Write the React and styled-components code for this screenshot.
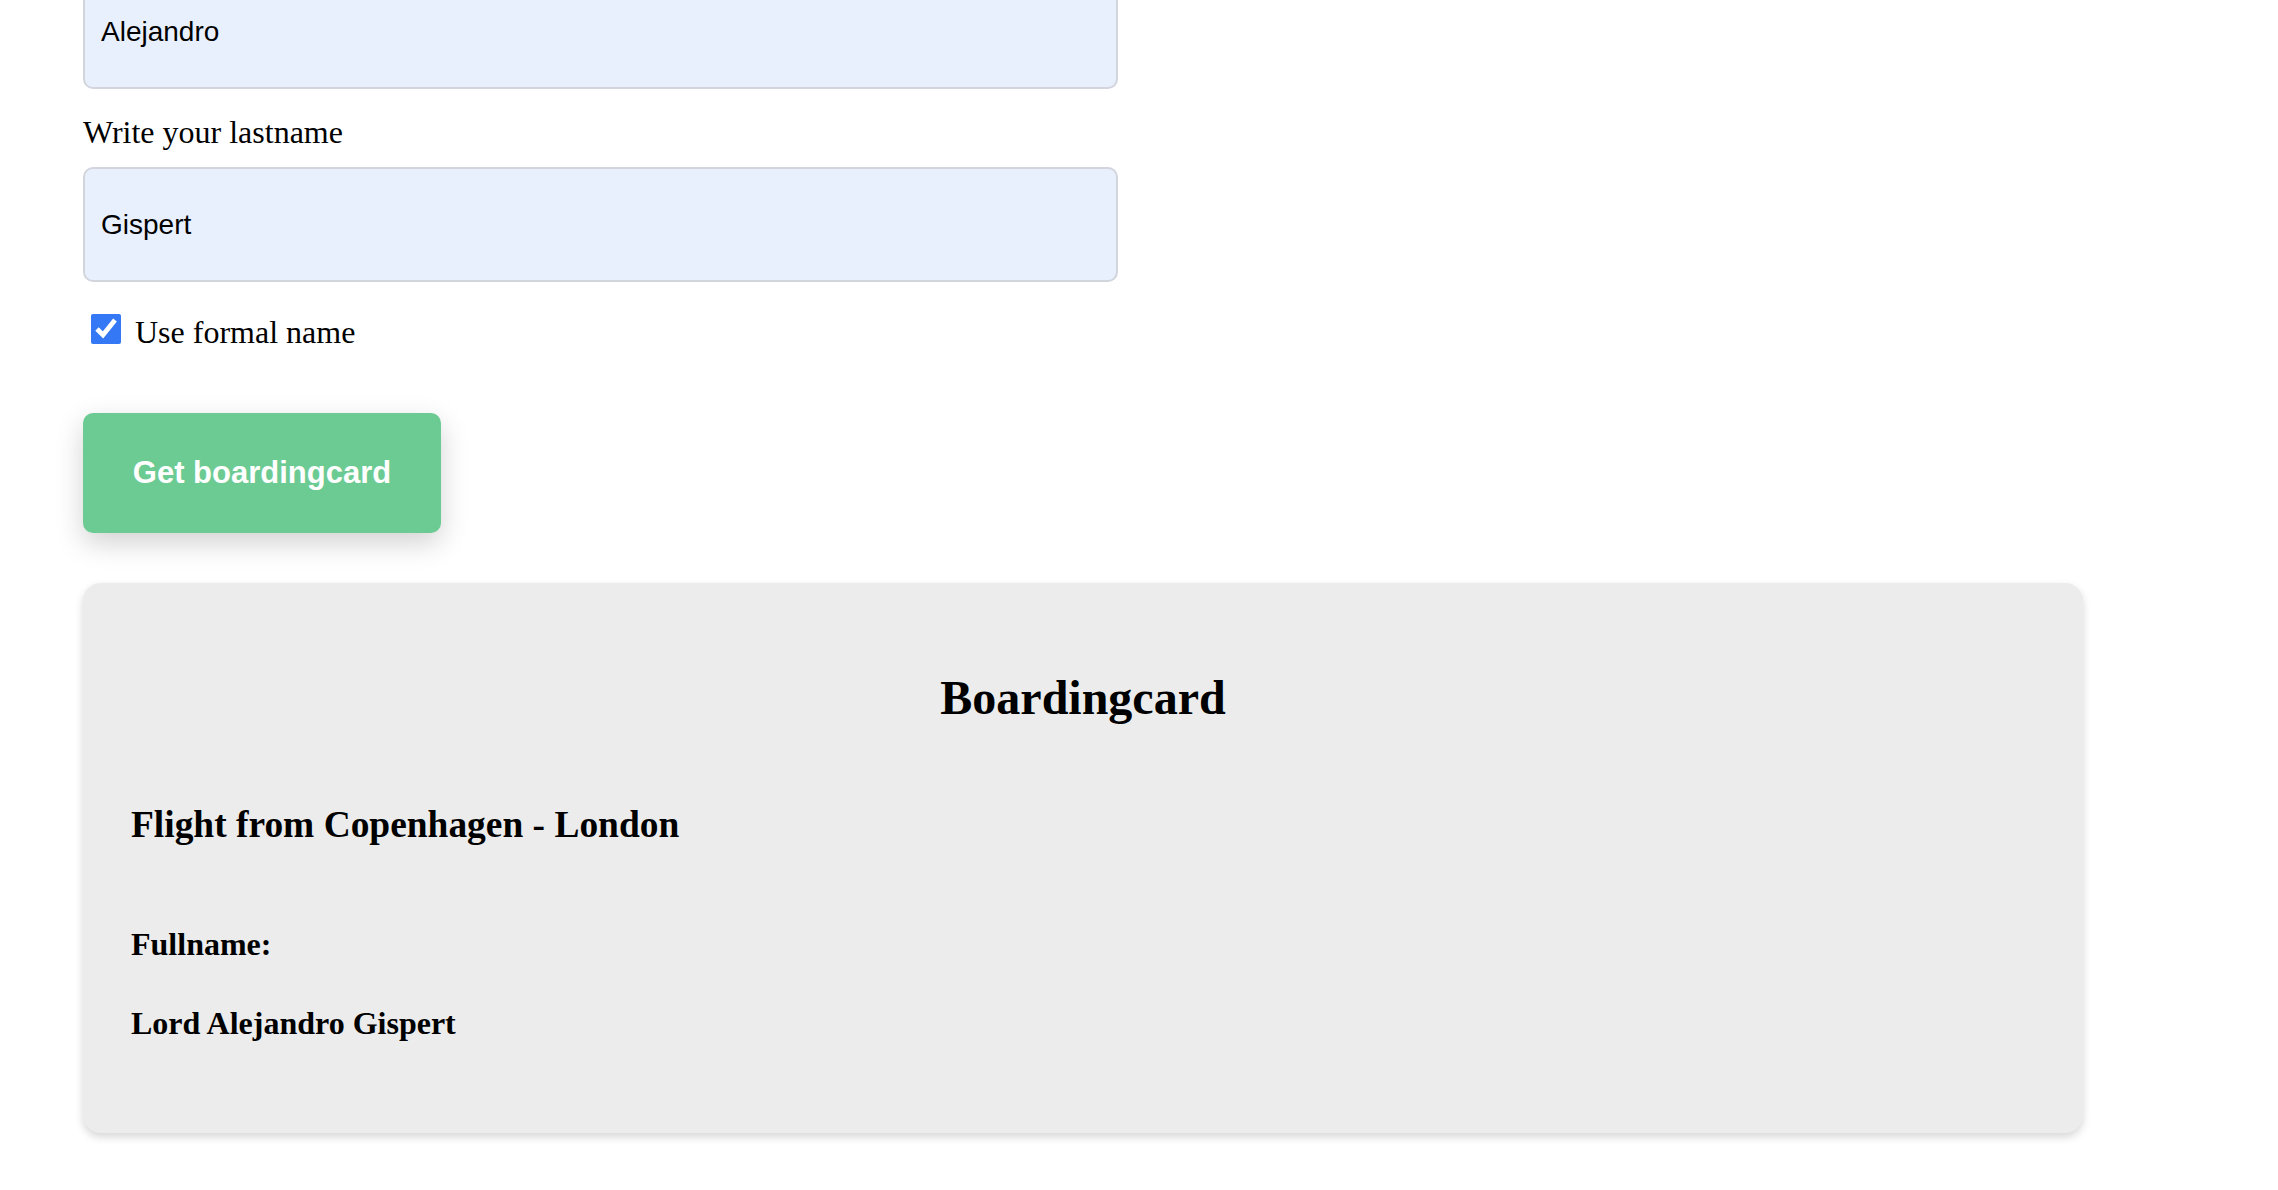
import React, { useState } from 'react';
import styled, { createGlobalStyle } from 'styled-components';

const GlobalStyle = createGlobalStyle`
  html, body {
    margin: 0;
    padding: 0;
    background: #ffffff;
  }
  body {
    font-family: "Liberation Serif", "Times New Roman", serif;
    font-size: 32px;
    color: #000;
  }
`;

const Page = styled.div`
  margin-top: -26px;
  padding: 0 0 40px 83px;
  width: 2000px;
`;

const Form = styled.form`
  display: flex;
  flex-direction: column;
  align-items: flex-start;
`;

const Label = styled.label`
  display: block;
  margin: 25px 0 16px;
  line-height: normal;
`;

const Input = styled.input`
  box-sizing: border-box;
  width: 1035px;
  height: 115px;
  padding: 0 16px;
  border: 2px solid #d2d6dc;
  border-radius: 10px;
  background: #e8f0fe;
  font-family: "Liberation Sans", Arial, sans-serif;
  font-size: 28px;
  color: #000;
  outline: none;
`;

const CheckRow = styled.label`
  display: flex;
  align-items: flex-start;
  gap: 14px;
  margin-top: 32px;
  line-height: normal;
  cursor: pointer;
`;

const Check = styled.input`
  width: 30px;
  height: 30px;
  margin: 0 0 0 8px;
  accent-color: #3478f6;
`;

const Button = styled.button`
  margin-top: 62px;
  width: 358px;
  height: 120px;
  border: none;
  border-radius: 10px;
  background: #6ccb93;
  color: #fff;
  font-family: "Liberation Sans", Arial, sans-serif;
  font-weight: bold;
  font-size: 31px;
  box-shadow: 0 10px 28px rgba(0, 0, 0, 0.18);
  cursor: pointer;
`;

const Card = styled.section`
  margin-top: 50px;
  box-sizing: border-box;
  width: 2000px;
  padding: 48px;
  display: flex;
  flex-direction: column;
  background: #ececec;
  border-radius: 18px;
  box-shadow: 0 4px 8px rgba(0, 0, 0, 0.16);
`;

const Title = styled.h2`
  margin: 39px 0 40px;
  font-size: 48px;
  text-align: center;
`;

const Flight = styled.h3`
  margin: 38px 0 37px;
  font-size: 37.44px;
`;

const Details = styled.div``;

const Field = styled.h4`
  margin: 42.5px 0;
  font-size: 32px;
`;

export default function App() {
  const [name, setName] = useState('Alejandro');
  const [lastname, setLastname] = useState('Gispert');
  const [formal, setFormal] = useState(true);

  return (
    <>
      <GlobalStyle />
      <Page>
        <Form onSubmit={(e) => e.preventDefault()}>
          <Input value={name} onChange={(e) => setName(e.target.value)} />
          <Label>Write your lastname</Label>
          <Input value={lastname} onChange={(e) => setLastname(e.target.value)} />
          <CheckRow>
            <Check
              type="checkbox"
              checked={formal}
              onChange={(e) => setFormal(e.target.checked)}
            />
            Use formal name
          </CheckRow>
          <Button type="submit">Get boardingcard</Button>
        </Form>
        <Card>
          <Title>Boardingcard</Title>
          <Flight>Flight from Copenhagen - London</Flight>
          <Details>
            <Field>Fullname:</Field>
            <Field>{formal ? 'Lord ' : ''}{name} {lastname}</Field>
          </Details>
        </Card>
      </Page>
    </>
  );
}
